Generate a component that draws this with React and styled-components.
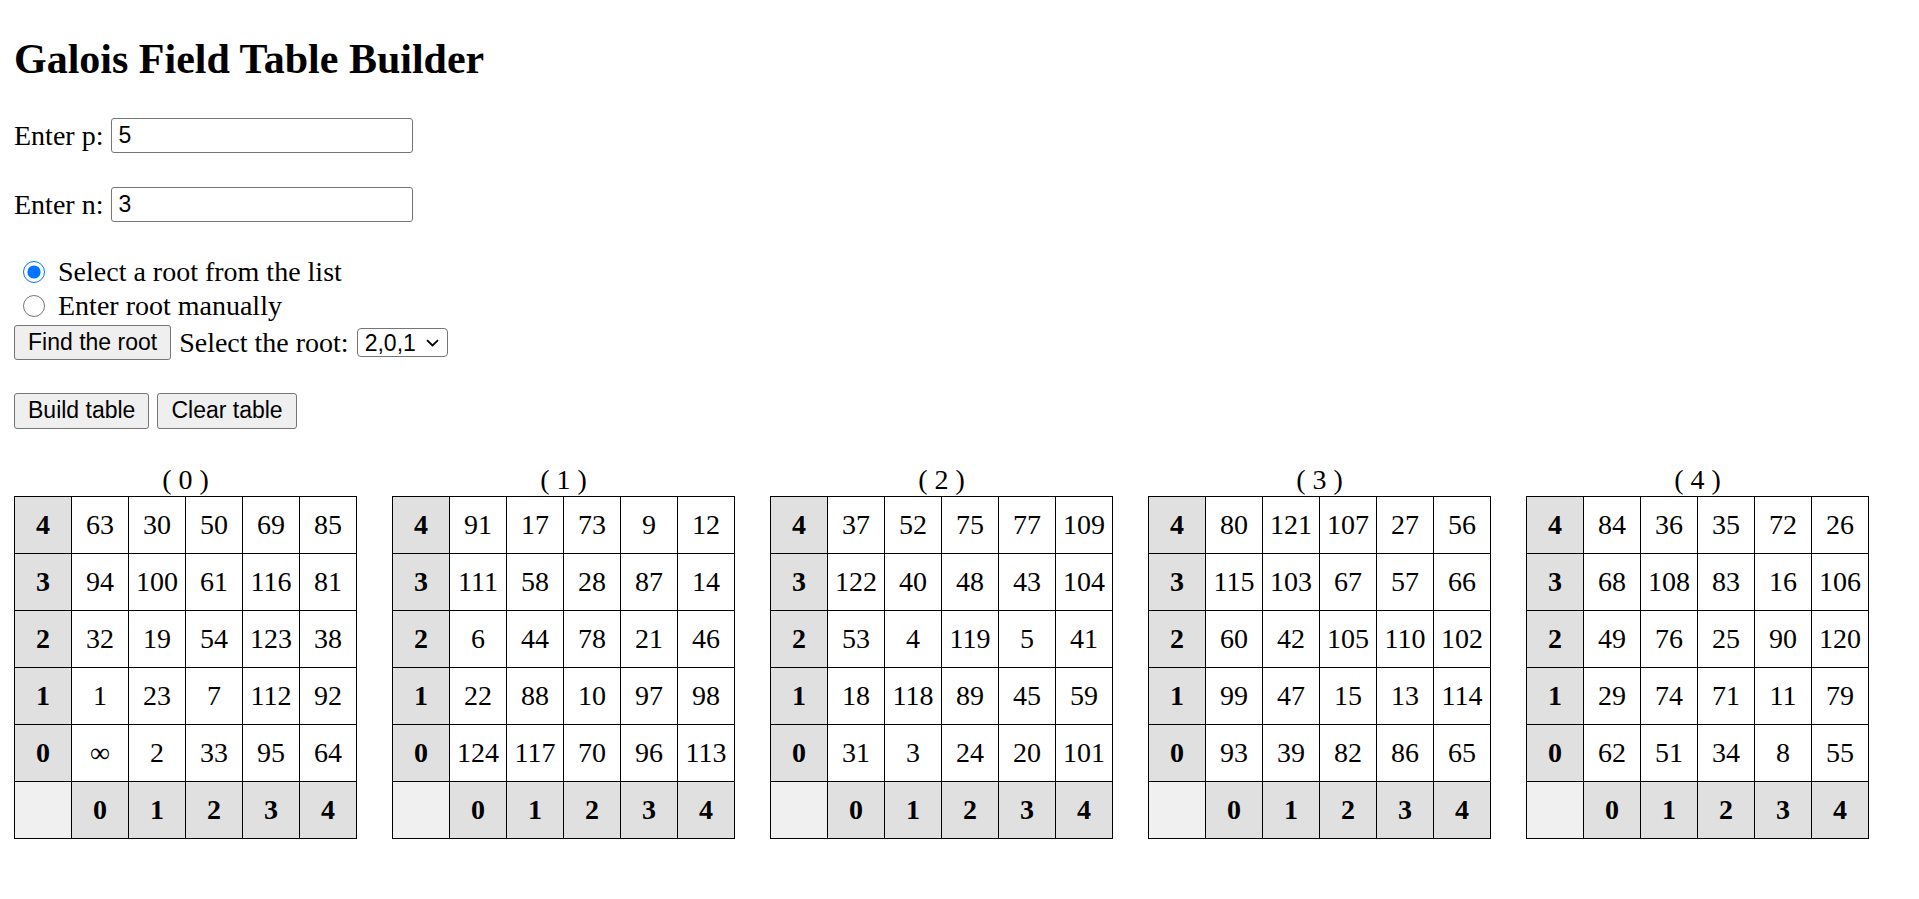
import React, { useState } from 'react'
import styled, { createGlobalStyle } from 'styled-components'

const GlobalStyle = createGlobalStyle`
  body {
    margin: 0 14px 14px 14px;
    font-family: "Liberation Serif", "Times New Roman", serif;
    font-size: 28px;
    color: #000;
    background: #fff;
  }
`

const Title = styled.h2`
  font-size: 42px;
  font-weight: bold;
  margin: 35px 0 35px 0;
  line-height: 48px;
`

const FieldRow = styled.div`
  display: flex;
  align-items: center;
  gap: 8px;
  height: 35px;
  margin-top: ${({ $top }) => $top}px;
`

const TextInput = styled.input`
  box-sizing: border-box;
  width: 302px;
  height: 35px;
  padding: 0 6px;
  border: 1px solid #767676;
  border-radius: 3px;
  font-family: "Liberation Sans", Arial, sans-serif;
  font-size: 23px;
  color: #000;
  outline: none;
`

const RadioLine = styled.label`
  display: flex;
  align-items: center;
  height: 34px;
  margin-top: ${({ $top }) => $top || 0}px;
`

const Radio = styled.input`
  width: 22px;
  height: 22px;
  margin: 0 13px 0 9px;
  accent-color: #0075ff;
`

const Button = styled.button`
  box-sizing: border-box;
  height: ${({ $h }) => $h || 35}px;
  padding: 0 13px;
  border: 1px solid #767676;
  border-radius: 3px;
  background: #efefef;
  font-family: "Liberation Sans", Arial, sans-serif;
  font-size: 23px;
  color: #000;
`

const SelectWrap = styled.span`
  position: relative;
  display: inline-flex;
`

const RootSelect = styled.select`
  box-sizing: border-box;
  width: 91px;
  height: 29px;
  padding: 0 0 0 7px;
  border: 1px solid #767676;
  border-radius: 4px;
  background: #fff;
  appearance: none;
  font-family: "Liberation Sans", Arial, sans-serif;
  font-size: 23px;
  color: #000;
`

const Chevron = styled.svg`
  position: absolute;
  right: 9px;
  top: 11px;
  pointer-events: none;
`

const Tables = styled.div`
  display: flex;
  gap: 35px;
  margin-top: 36px;
`

const Grid = styled.table`
  border-collapse: collapse;
  table-layout: fixed;
`

const Caption = styled.caption`
  font-size: 28px;
  line-height: 32px;
`

const Cell = styled.td`
  width: 56px;
  height: 56px;
  padding: 0;
  border: 1px solid #000;
  text-align: center;
  font-size: 28px;
  font-weight: ${({ $head }) => ($head ? 'bold' : 'normal')};
  background: ${({ $head, $corner }) => ($corner ? '#f0f0f0' : $head ? '#e0e0e0' : '#fff')};
`

const data = [
  [
    ['63', '30', '50', '69', '85'],
    ['94', '100', '61', '116', '81'],
    ['32', '19', '54', '123', '38'],
    ['1', '23', '7', '112', '92'],
    ['∞', '2', '33', '95', '64'],
  ],
  [
    ['91', '17', '73', '9', '12'],
    ['111', '58', '28', '87', '14'],
    ['6', '44', '78', '21', '46'],
    ['22', '88', '10', '97', '98'],
    ['124', '117', '70', '96', '113'],
  ],
  [
    ['37', '52', '75', '77', '109'],
    ['122', '40', '48', '43', '104'],
    ['53', '4', '119', '5', '41'],
    ['18', '118', '89', '45', '59'],
    ['31', '3', '24', '20', '101'],
  ],
  [
    ['80', '121', '107', '27', '56'],
    ['115', '103', '67', '57', '66'],
    ['60', '42', '105', '110', '102'],
    ['99', '47', '15', '13', '114'],
    ['93', '39', '82', '86', '65'],
  ],
  [
    ['84', '36', '35', '72', '26'],
    ['68', '108', '83', '16', '106'],
    ['49', '76', '25', '90', '120'],
    ['29', '74', '71', '11', '79'],
    ['62', '51', '34', '8', '55'],
  ],
]

const FieldTable = ({ index, rows }) => (
  <Grid>
    <Caption>( {index} )</Caption>
    <tbody>
      {rows.map((row, r) => (
        <tr key={r}>
          <Cell $head>{4 - r}</Cell>
          {row.map((v, c) => (
            <Cell key={c}>{v}</Cell>
          ))}
        </tr>
      ))}
      <tr>
        <Cell $corner />
        {[0, 1, 2, 3, 4].map((c) => (
          <Cell key={c} $head>{c}</Cell>
        ))}
      </tr>
    </tbody>
  </Grid>
)

const App = () => {
  const [p, setP] = useState('5')
  const [n, setN] = useState('3')
  const [mode, setMode] = useState('list')

  return (
    <>
      <GlobalStyle />
      <Title>Galois Field Table Builder</Title>
      <FieldRow $top={0}>
        <span>Enter p:</span>
        <TextInput value={p} onChange={(e) => setP(e.target.value)} />
      </FieldRow>
      <FieldRow $top={34}>
        <span>Enter n:</span>
        <TextInput value={n} onChange={(e) => setN(e.target.value)} />
      </FieldRow>
      <RadioLine $top={33}>
        <Radio type="radio" name="mode" checked={mode === 'list'} onChange={() => setMode('list')} />
        Select a root from the list
      </RadioLine>
      <RadioLine>
        <Radio type="radio" name="mode" checked={mode === 'manual'} onChange={() => setMode('manual')} />
        Enter root manually
      </RadioLine>
      <FieldRow $top={2}>
        <Button>Find the root</Button>
        <span>Select the root:</span>
        <SelectWrap>
          <RootSelect defaultValue="2,0,1">
            <option>2,0,1</option>
          </RootSelect>
          <Chevron width="13" height="8" viewBox="0 0 13 8">
            <path d="M1 1.2 L6.5 6.5 L12 1.2" fill="none" stroke="#000" strokeWidth="1.8" />
          </Chevron>
        </SelectWrap>
      </FieldRow>
      <FieldRow $top={33}>
        <Button $h={36}>Build table</Button>
        <Button $h={36}>Clear table</Button>
      </FieldRow>
      <Tables>
        {data.map((rows, i) => (
          <FieldTable key={i} index={i} rows={rows} />
        ))}
      </Tables>
    </>
  )
}

export default App
